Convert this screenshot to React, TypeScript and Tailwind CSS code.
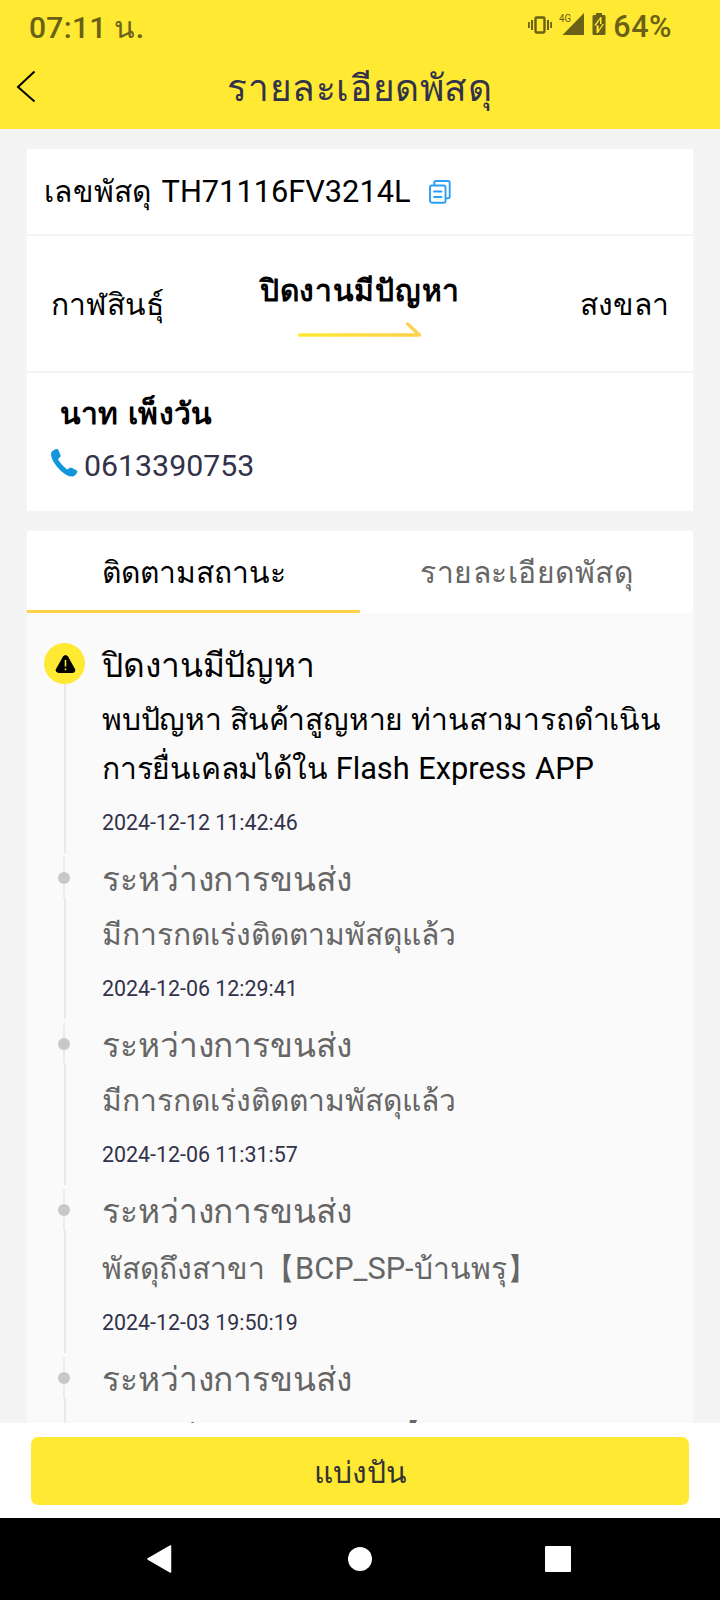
import type { ReactNode } from "react"

type TrackEvent = {
  title: string
  lines: string[]
  time: string
  active?: boolean
  gap: string
  height: string
}

const EVENTS: TrackEvent[] = [
  {
    title: "ปิดงานมีปัญหา",
    lines: ["พบปัญหา สินค้าสูญหาย ท่านสามารถดำเนิน", "การยื่นเคลมได้ใน Flash Express APP"],
    time: "2024-12-12 11:42:46",
    active: true,
    gap: "mt-[3px] mb-[15px] tracking-[-0.2px] [word-spacing:1px]",
    height: "h-[210px]",
  },
  { title: "ระหว่างการขนส่ง", lines: ["มีการกดเร่งติดตามพัสดุแล้ว"], time: "2024-12-06 12:29:41", gap: "mt-[4px] mb-[15px]", height: "h-[162px]" },
  { title: "ระหว่างการขนส่ง", lines: ["มีการกดเร่งติดตามพัสดุแล้ว"], time: "2024-12-06 11:31:57", gap: "mt-[4px] mb-[15px]", height: "h-[162px]" },
  { title: "ระหว่างการขนส่ง", lines: ["พัสดุถึงสาขา【BCP_SP-บ้านพรุ】"], time: "2024-12-03 19:50:19", gap: "mt-[6px] mb-[15px]", height: "h-[164px]" },
  { title: "ระหว่างการขนส่ง", lines: ["รถขนส่งออกจากสาขา【BCP_SP-", "บ้านพรุ】"], time: "2024-12-03 11:02:36", gap: "mt-[4px] mb-[15px]", height: "h-[164px]" },
]

// Latin runs are set slightly larger than the Thai beside them
function Mixed({ text }: { text: string }) {
  return (
    <>
      {text.split(/([A-Z][A-Za-z0-9_ -]*)/).map((part, i) => (
        <span key={i} className={i % 2 ? "text-[1.025em] tracking-normal" : ""}>{part}</span>
      ))}
    </>
  )
}

function StatusBar() {
  return (
    <div className="flex h-[50px] items-start justify-between pl-[29px] pr-[48px] text-[30px] leading-[36px] font-medium text-[#6a6116]">
      <span className="mt-[10px] tracking-[0.3px]">07:11 <span className="font-normal">น</span>.</span>
      <div className="flex items-start">
        <svg className="mt-[13px]" width="24" height="24" viewBox="0 0 24 24" fill="none" stroke="currentColor">
          <rect x="7.500" y="4.500" width="9" height="15" rx="1.200" strokeWidth="2.400" />
          <path d="M.8 9v6M4 7v10M20 7v10M23.2 9v6" strokeWidth="2" />
        </svg>
        <svg className="ml-[7px] mt-[12px]" width="26" height="24" viewBox="0 0 26 24" fill="currentColor">
          <text x="0" y="10" fontSize="11" fontWeight="400" textLength="12" lengthAdjust="spacingAndGlyphs">4G</text>
          <path d="M3.500 23 25 1v22z" />
        </svg>
        <svg className="ml-[7px] mt-[13px]" width="14" height="22" viewBox="0 0 14 22" fill="currentColor">
          <path fillRule="evenodd" d="M4 0h6v2h2.500Q13.500 2 13.500 3.500v17q0 1.500-1.500 1.500h-10.500Q.5 22 .5 20.500v-17Q.5 2 1.500 2H4zM8.500 4 2 12.500h2.500V20H6l6-9H9.500V4z" />
          <path d="M8 6.500 4 12.500h2.700v4.500L10.500 11H8z" />
        </svg>
        <span className="ml-[7px] mt-[9px] text-[30.500px] tracking-[0.5px]">64%</span>
      </div>
    </div>
  )
}

function Header() {
  return (
    <header className="flex h-[129px] shrink-0 flex-col bg-[#ffe933]">
      <StatusBar />
      <div className="grid h-[79px] grid-cols-[60px_1fr_60px]">
        <svg className="ml-[16px] mt-[20px]" width="20" height="33" viewBox="0 0 20 33" fill="none" stroke="#000" strokeWidth="2">
          <path d="M18.500 1.500 2 17l16.500 14.500" />
        </svg>
        <h1 className="mt-[13px] text-center text-[37px] leading-[52px] tracking-[0.6px] text-[#32324a]">รายละเอียดพัสดุ</h1>
      </div>
    </header>
  )
}

function CopyIcon() {
  return (
    <svg width="22" height="24" viewBox="0 0 22 24" fill="none" stroke="#2b9ff5" strokeWidth="1.900" strokeLinecap="round">
      <rect x="1" y="5.500" width="15.500" height="17.200" rx="1.800" />
      <path d="M5.300 5V2.800Q5.300 1 7 1h12Q20.700 1 20.700 2.800V16.500q0 1.800-1.700 1.800h-2M5 11.500h7.500M5 17h7.500" />
    </svg>
  )
}

function ParcelCard() {
  return (
    <section className="mt-5 flex h-[362px] flex-col bg-white text-black">
      <div className="flex h-[87px] items-center border-b-2 border-[#f4f4f4] pl-[17px] text-[30px]">
        <span className="mt-px whitespace-nowrap leading-[44px] tracking-[0.3px] [word-spacing:2px]"><Mixed text="เลขพัสดุ TH71116FV3214L" /></span>
        <span className="ml-[18px]"><CopyIcon /></span>
      </div>
      <div className="grid h-[137px] grid-cols-3 border-b-2 border-[#f4f4f4] px-[24px] text-[30px] leading-[44px]">
        <span className="mt-[47px] tracking-[-0.1px]">กาฬสินธุ์</span>
        <div className="flex flex-col items-center">
          <span className="mt-[33px] whitespace-nowrap font-bold tracking-[0.7px]">ปิดงานมีปัญหา</span>
          <svg className="mt-[8px]" width="126" height="16" viewBox="0 0 126 16" fill="none" strokeWidth="3.300" strokeLinecap="round" strokeLinejoin="round">
            <defs>
              <linearGradient id="arrow" gradientUnits="userSpaceOnUse" x1="0" y1="0" x2="126" y2="0">
                <stop offset="0" stopColor="#ffe933" />
                <stop offset="1" stopColor="#ffcf4d" />
              </linearGradient>
            </defs>
            <path d="M2.500 14h120L110.500 3" stroke="url(#arrow)" />
          </svg>
        </div>
        <span className="mt-[47px] text-right">สงขลา</span>
      </div>
      <div className="flex flex-col">
        <span className="ml-[33px] mt-[19px] text-[30px] leading-[44px] font-bold tracking-[0.2px] [word-spacing:2px]">นาท เพ็งวัน</span>
        <div className="ml-[23px] mt-[9px] flex items-start">
          <svg className="mt-[3px]" width="28" height="30" viewBox="0 0 28 30" fill="#1296db">
            <path d="M1.500 4C2.500 2.500 5 1 7 1q1 0 1.500 1.200l2 5q.4 1.300-.6 2L8.500 10.500q-.6.700 0 1.700 3.400 5.300 8 8.800.8.600 1.500 0l1.500-1q1-.7 2-.2l5 2.500q1.300.8.800 2-1.500 3.500-4.300 4.200-3 .5-7-1.800C9.500 22.800 3.500 15.500 1.300 8.500Q.7 5.500 1.500 4z" />
          </svg>
          <span className="ml-[6px] mt-px text-[30.3px] leading-[40px] text-[#32324a]">0613390753</span>
        </div>
      </div>
    </section>
  )
}

function Tab({ active, children }: { active?: boolean; children: ReactNode }) {
  return (
    <button
      className={
        active
          ? "h-[82px] flex-1 border-b-3 border-[#ffcf44] pt-[4px] text-black"
          : "h-[82px] flex-1 border-b-3 border-white pt-[4px] tracking-[0.5px] text-[#666]"
      }
    >
      {children}
    </button>
  )
}

function Rail({ active }: { active?: boolean }) {
  return (
    <div className="flex w-[41px] shrink-0 flex-col items-center">
      {active ? (
        <div className="flex size-[41px] shrink-0 items-center justify-center rounded-full bg-[#ffe933]">
          <svg className="ml-px" width="21" height="18" viewBox="0 0 21 18">
            <path d="M8 1.500q2.500-3 5 0l7 12.500q1.200 3.500-2.500 4h-14Q-.3 17.500 1 14z" fill="#000" />
            <path d="M10.500 5v6.500M10.500 13.500v1.800" stroke="#ffe933" strokeWidth="1.600" />
          </svg>
        </div>
      ) : (
        <div className="mr-[2px] flex h-[41px] w-[12px] shrink-0 flex-col items-center">
          <div className="h-[15px] w-[2px] bg-[#ececec]" />
          <div className="size-[12px] rounded-full bg-[#c8c8c8]" />
          <div className="h-[14px] w-[2px] bg-[#ececec]" />
        </div>
      )}
      <div className="ml-px w-[2px] flex-1 bg-[#e9e9e9]" />
    </div>
  )
}

function TimelineItem({ event }: { event: TrackEvent }) {
  const tone = event.active ? "text-black" : "text-[#666]"
  return (
    <li className={`flex shrink-0 ${event.height}`}>
      <Rail active={event.active} />
      <div className={`ml-[17px] flex flex-col whitespace-nowrap ${tone}`}>
        <h2 className="-mt-[3px] text-[33.500px] leading-[52px] tracking-[-0.1px]">{event.title}</h2>
        <div className={`text-[30px] leading-[49px] ${event.gap}`}>
          {event.lines.map((line) => <p key={line}><Mixed text={line} /></p>)}
        </div>
        <time className="text-[21.400px] leading-[30px] text-[#32324a]">{event.time}</time>
      </div>
    </li>
  )
}

function Footer() {
  return (
    <footer className="shrink-0">
      <div className="h-[95px] bg-white px-[31px] pt-[14px]">
        <button className="h-[68px] w-full rounded-[7px] bg-[#ffe933] pt-[3px] text-[30px] text-[#333]">แบ่งปัน</button>
      </div>
      <div className="flex h-[82px] items-center justify-between bg-black pl-[147px] pr-[149px]">
        <svg width="25" height="28" viewBox="0 0 25 28"><path d="M1 14 23.500 1v26z" fill="#fff" stroke="#fff" strokeWidth="1.500" strokeLinejoin="round" /></svg>
        <div className="ml-[3px] size-[24px] rounded-full bg-white" />
        <div className="size-[26px] rounded-[1px] bg-white" />
      </div>
    </footer>
  )
}

export default function App() {
  return (
    <div className="flex h-[1600px] w-[720px] flex-col overflow-hidden bg-[#f4f4f4] font-[Roboto,sans-serif]">
      <Header />
      <main className="min-h-0 flex-1 overflow-hidden px-[27px]">
        <ParcelCard />
        <section className="mt-5">
          <div className="flex bg-white text-[30px]">
            <Tab active>ติดตามสถานะ</Tab>
            <Tab>รายละเอียดพัสดุ</Tab>
          </div>
          <ul className="flex flex-col gap-1 bg-[#fafafa] pl-[17px] pt-[30px]">
            {EVENTS.map((e) => <TimelineItem key={e.time} event={e} />)}
          </ul>
        </section>
      </main>
      <Footer />
    </div>
  )
}
